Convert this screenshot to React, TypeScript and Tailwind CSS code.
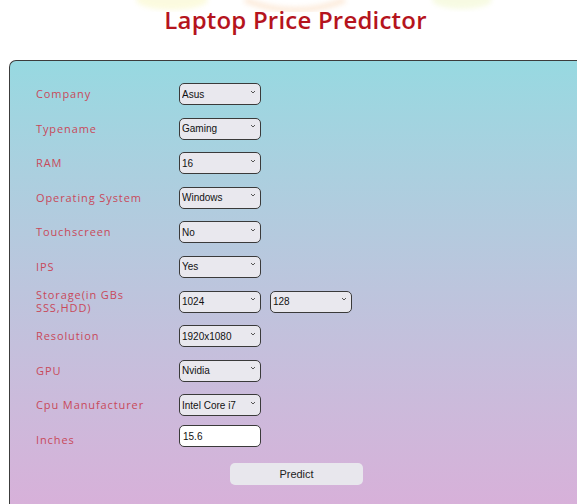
import React from 'react';

type Field = {
    label: string;
    value: string;
    extra?: string;
    input?: boolean;
};

const fields: Field[] = [
    { label: 'Company', value: 'Asus' },
    { label: 'Typename', value: 'Gaming' },
    { label: 'RAM', value: '16' },
    { label: 'Operating System', value: 'Windows' },
    { label: 'Touchscreen', value: 'No' },
    { label: 'IPS', value: 'Yes' },
    { label: 'Storage(in GBs SSS,HDD)', value: '1024', extra: '128' },
    { label: 'Resolution', value: '1920x1080' },
    { label: 'GPU', value: 'Nvidia' },
    { label: 'Cpu Manufacturer', value: 'Intel Core i7' },
    { label: 'Inches', value: '15.6', input: true },
];

const Chevron = () => (
    <svg width="6" height="4" viewBox="0 0 6 4" className="absolute right-[5px] top-[10px] pointer-events-none">
        <path d="M1 1l2 2 2-2" fill="none" stroke="#555" strokeWidth="1" />
    </svg>
);

const FakeSelect = ({ value }: { value: string }) => (
    <div className="relative w-[82px] h-[22px]">
        <select
            defaultValue={value}
            className="appearance-none w-full h-full bg-[#e9e8ee] border-[1.5px] border-[#3a3a3a] rounded-[5px] pl-[2px] text-[10px] text-[#111] outline-none"
            style={{ fontFamily: '"Liberation Sans", Arial, sans-serif' }}
        >
            <option>{value}</option>
        </select>
        <Chevron />
    </div>
);

// faint blobs from the header artwork, cut off at the top edge
const HeaderArt = () => (
    <svg width="577" height="12" className="absolute top-0 left-0" aria-hidden>
        <defs>
            <filter id="soft">
                <feGaussianBlur stdDeviation="2.5" />
            </filter>
        </defs>
        <g filter="url(#soft)" opacity="0.22">
            <ellipse cx="172" cy="0" rx="36" ry="10" fill="#f0ec70" />
            <path d="M245 0 Q295 20 345 0" fill="none" stroke="#f5a860" strokeWidth="6" />
            <ellipse cx="462" cy="0" rx="30" ry="9" fill="#dcec80" />
        </g>
    </svg>
);

export default function App() {
    return (
        <div className="relative h-[504px] overflow-hidden bg-white">
            <HeaderArt />
            <h1
                className="relative text-center pt-[4px] pl-[14px] text-[24px] leading-[32px] font-semibold text-[#b5141d] tracking-[0.2px]"
                style={{ fontFamily: '"Open Sans", sans-serif' }}
            >
                Laptop Price Predictor
            </h1>
            <div className="ml-[9px] mt-[24px] h-[460px] border-l-[1.5px] border-t-[1.5px] border-[#3c3c3c] rounded-tl-[7px] bg-gradient-to-b from-[#97d9e1] to-[#d9afd9]">
                <div className="pl-[26px] pt-[18.5px] flex flex-col gap-[12.6px]">
                    {fields.map((f) => (
                        <div key={f.label} className="flex items-center h-[22px]">
                            <label
                                className="w-[143px] mt-[6px] text-[11px] leading-[13px] tracking-[0.9px] text-[#c8495a] pr-[24px]"
                                style={{ fontFamily: '"Open Sans", sans-serif' }}
                            >
                                {f.label}
                            </label>
                            {f.input ? (
                                <input
                                    type="text"
                                    defaultValue={f.value}
                                    className="w-[82px] h-[22px] bg-white border-[1.5px] border-[#3a3a3a] rounded-[5px] pl-[3px] text-[10px] text-[#111] outline-none"
                                    style={{ fontFamily: '"Liberation Sans", Arial, sans-serif' }}
                                />
                            ) : (
                                <div className="flex gap-[9px]">
                                    <FakeSelect value={f.value} />
                                    {f.extra && <FakeSelect value={f.extra} />}
                                </div>
                            )}
                        </div>
                    ))}
                    <div className="pl-[194px]">
                        <button
                            className="w-[133px] h-[22px] bg-[#e8e7ed] rounded-[5px] text-[11px] text-[#222]"
                            style={{ fontFamily: '"Liberation Sans", Arial, sans-serif' }}
                        >
                            Predict
                        </button>
                    </div>
                </div>
            </div>
        </div>
    );
}
